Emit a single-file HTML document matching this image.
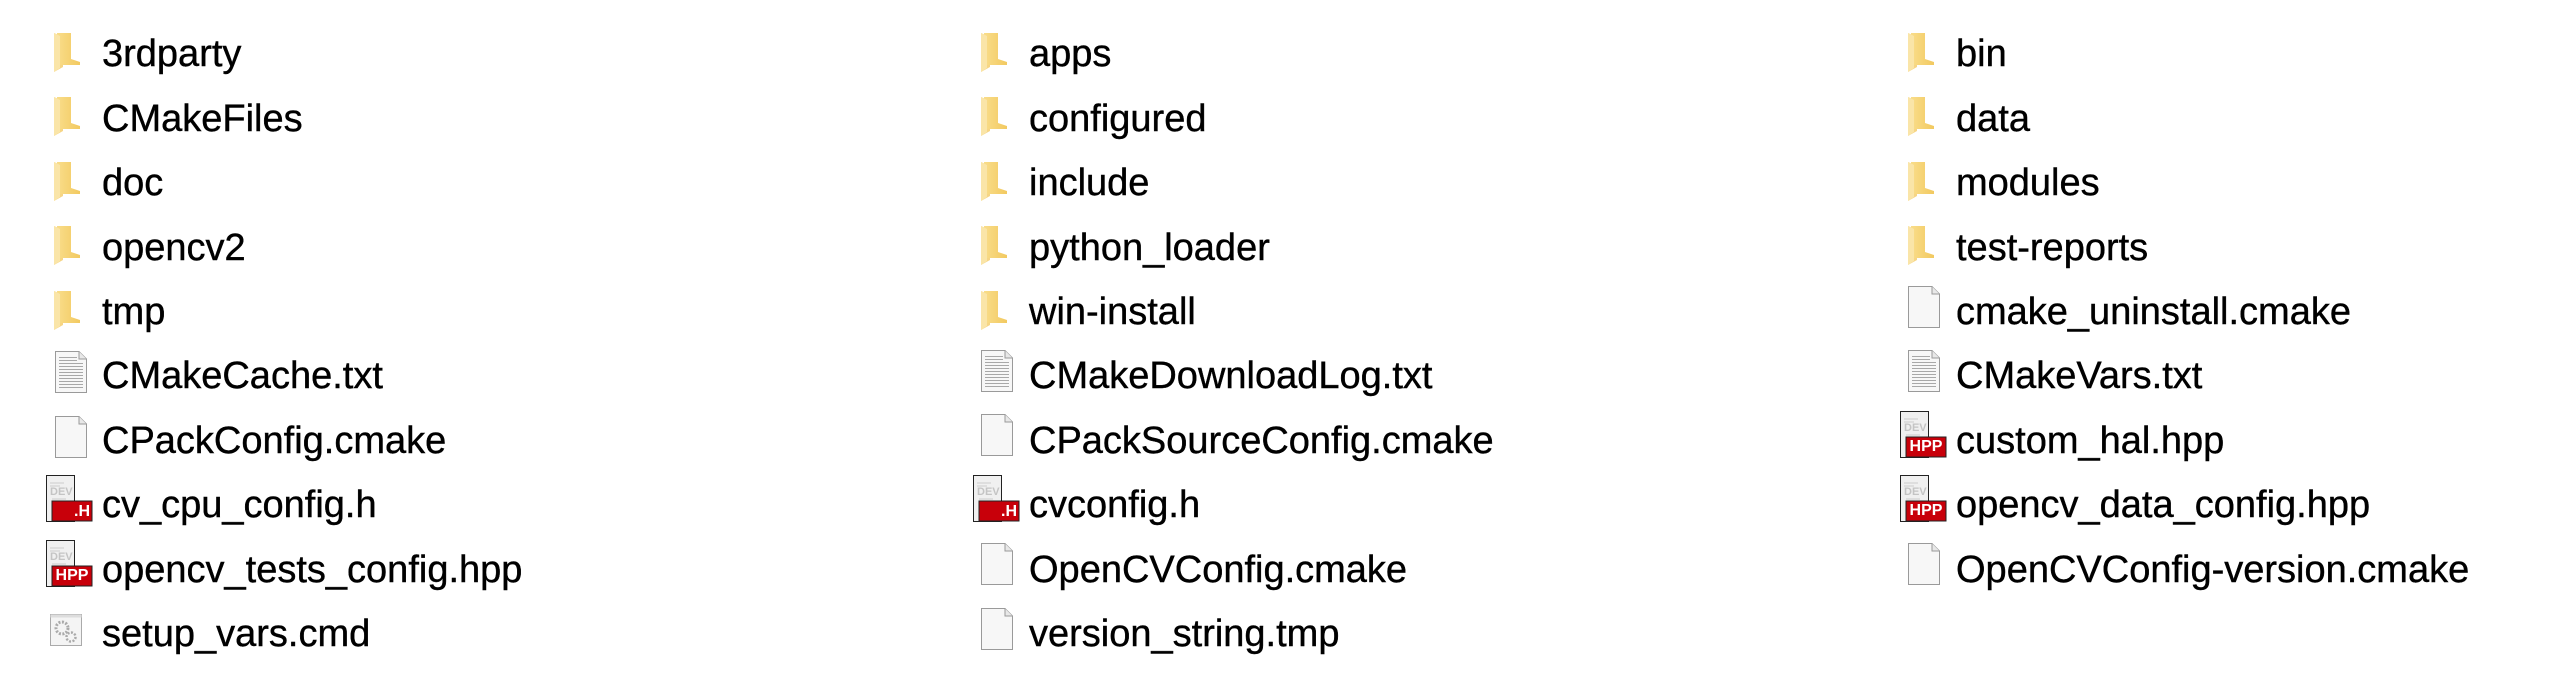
<!DOCTYPE html>
<html><head><meta charset="utf-8"><style>
html,body{margin:0;padding:0;background:#fff;width:2565px;height:679px;overflow:hidden;position:relative}
.t{position:absolute;font-family:"Liberation Sans",sans-serif;font-size:38px;line-height:38px;color:#000;white-space:nowrap;margin-top:3px;-webkit-text-stroke:0.4px #000}
svg.i{position:absolute}
.b{position:absolute;font:bold 16px/18px 'Liberation Sans',sans-serif;color:#fff;text-align:center}
</style></head><body>
<svg width="0" height="0" style="position:absolute">
<defs>
<linearGradient id="fg" x1="0" x2="1"><stop offset="0" stop-color="#f9dd8a"/><stop offset="1" stop-color="#f2c960"/></linearGradient>
<symbol id="folder" viewBox="0 0 28 40">
<path d="M0 1 L9 5 L9 35 L0 40 Z" fill="#f6d585"/>
<path d="M3 1 H17 V27 L26 30 V33 H3 Z" fill="url(#fg)"/>
<path d="M0 1 L6 4 L6 36 L0 40 Z" fill="#fae5a8"/>
</symbol>
<symbol id="file" viewBox="0 0 32 42">
<path d="M0.5 0.5 H24 L31.5 8 V41.5 H0.5 Z" fill="#f7f7f7" stroke="#9a9a9a"/>
<path d="M24 0.5 V8 H31.5" fill="#e8e8e8" stroke="#9a9a9a"/>
</symbol>
<symbol id="txt" viewBox="0 0 32 42">
<path d="M0.5 0.5 H24 L31.5 8 V41.5 H0.5 Z" fill="#f7f7f7" stroke="#9a9a9a"/>
<path d="M24 0.5 V8 H31.5" fill="#e8e8e8" stroke="#9a9a9a"/>
<g stroke="#a8a8a8" stroke-width="1"><path d="M4 6.5H22M4 9.5H22M4 12.5H28M4 15.5H28M4 18.5H28M4 21.5H28M4 24.5H28M4 27.5H28M4 30.5H28M4 33.5H28M4 36.5H28"/></g>
</symbol>
<symbol id="hdr" viewBox="0 0 47 48">
<rect x="0.5" y="0.5" width="28" height="46" fill="#f0f0f0" stroke="#222"/>
<text x="4" y="20" font-family="Liberation Sans" font-size="11" font-weight="bold" fill="#c4c4c4">DEV</text>
<path d="M4 8H18M4 11H14M6 24H20M6 28H16" stroke="#ccc"/>
<rect x="6" y="26" width="40" height="20" fill="#c8000a" stroke="#222"/>
</symbol>
<symbol id="cmd" viewBox="0 0 32 32">
<rect x="0.5" y="0.5" width="31" height="31" fill="#f4f4f4" stroke="#aaa"/>
<rect x="0.5" y="0.5" width="31" height="3" fill="#ddd"/>
<circle cx="12" cy="14" r="6" fill="none" stroke="#aaa" stroke-width="3" stroke-dasharray="2 1.5"/>
<circle cx="21" cy="23" r="4.5" fill="none" stroke="#aaa" stroke-width="2.5" stroke-dasharray="2 1.5"/>
</symbol>
</defs></svg>

<svg class="i" style="left:54px;top:32px" width="28" height="40"><use href="#folder"/></svg><div class="t" style="left:102px;top:32px">3rdparty</div>
<svg class="i" style="left:54px;top:96px" width="28" height="40"><use href="#folder"/></svg><div class="t" style="left:102px;top:97px">CMakeFiles</div>
<svg class="i" style="left:54px;top:161px" width="28" height="40"><use href="#folder"/></svg><div class="t" style="left:102px;top:161px">doc</div>
<svg class="i" style="left:54px;top:225px" width="28" height="40"><use href="#folder"/></svg><div class="t" style="left:102px;top:226px">opencv2</div>
<svg class="i" style="left:54px;top:290px" width="28" height="40"><use href="#folder"/></svg><div class="t" style="left:102px;top:290px">tmp</div>
<svg class="i" style="left:55px;top:351px" width="32" height="42"><use href="#txt"/></svg><div class="t" style="left:102px;top:354px">CMakeCache.txt</div>
<svg class="i" style="left:55px;top:416px" width="32" height="42"><use href="#file"/></svg><div class="t" style="left:102px;top:419px">CPackConfig.cmake</div>
<svg class="i" style="left:46px;top:475px" width="47" height="48"><use href="#hdr"/></svg><div class="t" style="left:102px;top:483px">cv_cpu_config.h</div>
<svg class="i" style="left:46px;top:540px" width="47" height="48"><use href="#hdr"/></svg><div class="t" style="left:102px;top:548px">opencv_tests_config.hpp</div>
<svg class="i" style="left:50px;top:614px" width="32" height="32"><use href="#cmd"/></svg><div class="t" style="left:102px;top:612px">setup_vars.cmd</div>

<svg class="i" style="left:981px;top:32px" width="28" height="40"><use href="#folder"/></svg><div class="t" style="left:1029px;top:32px">apps</div>
<svg class="i" style="left:981px;top:96px" width="28" height="40"><use href="#folder"/></svg><div class="t" style="left:1029px;top:97px">configured</div>
<svg class="i" style="left:981px;top:161px" width="28" height="40"><use href="#folder"/></svg><div class="t" style="left:1029px;top:161px">include</div>
<svg class="i" style="left:981px;top:225px" width="28" height="40"><use href="#folder"/></svg><div class="t" style="left:1029px;top:226px">python_loader</div>
<svg class="i" style="left:981px;top:290px" width="28" height="40"><use href="#folder"/></svg><div class="t" style="left:1029px;top:290px">win-install</div>
<svg class="i" style="left:981px;top:350px" width="32" height="42"><use href="#txt"/></svg><div class="t" style="left:1029px;top:354px">CMakeDownloadLog.txt</div>
<svg class="i" style="left:981px;top:414px" width="32" height="42"><use href="#file"/></svg><div class="t" style="left:1029px;top:419px">CPackSourceConfig.cmake</div>
<svg class="i" style="left:973px;top:475px" width="47" height="48"><use href="#hdr"/></svg><div class="t" style="left:1029px;top:483px">cvconfig.h</div>
<svg class="i" style="left:981px;top:543px" width="32" height="42"><use href="#file"/></svg><div class="t" style="left:1029px;top:548px">OpenCVConfig.cmake</div>
<svg class="i" style="left:981px;top:608px" width="32" height="42"><use href="#file"/></svg><div class="t" style="left:1029px;top:612px">version_string.tmp</div>

<svg class="i" style="left:1908px;top:32px" width="28" height="40"><use href="#folder"/></svg><div class="t" style="left:1956px;top:32px">bin</div>
<svg class="i" style="left:1908px;top:96px" width="28" height="40"><use href="#folder"/></svg><div class="t" style="left:1956px;top:97px">data</div>
<svg class="i" style="left:1908px;top:161px" width="28" height="40"><use href="#folder"/></svg><div class="t" style="left:1956px;top:161px">modules</div>
<svg class="i" style="left:1908px;top:225px" width="28" height="40"><use href="#folder"/></svg><div class="t" style="left:1956px;top:226px">test-reports</div>
<svg class="i" style="left:1908px;top:286px" width="32" height="42"><use href="#file"/></svg><div class="t" style="left:1956px;top:290px">cmake_uninstall.cmake</div>
<svg class="i" style="left:1908px;top:350px" width="32" height="42"><use href="#txt"/></svg><div class="t" style="left:1956px;top:354px">CMakeVars.txt</div>
<svg class="i" style="left:1900px;top:411px" width="47" height="48"><use href="#hdr"/></svg><div class="t" style="left:1956px;top:419px">custom_hal.hpp</div>
<svg class="i" style="left:1900px;top:475px" width="47" height="48"><use href="#hdr"/></svg><div class="t" style="left:1956px;top:483px">opencv_data_config.hpp</div>
<svg class="i" style="left:1908px;top:543px" width="32" height="42"><use href="#file"/></svg><div class="t" style="left:1956px;top:548px">OpenCVConfig-version.cmake</div>

<div class="b" style="left:60px;top:503px;width:30px;text-align:right">.H</div>
<div class="b" style="left:987px;top:503px;width:30px;text-align:right">.H</div>
<div class="b" style="left:52px;top:567px;width:40px">HPP</div>
<div class="b" style="left:1906px;top:438px;width:40px">HPP</div>
<div class="b" style="left:1906px;top:502px;width:40px">HPP</div>
</body></html>
